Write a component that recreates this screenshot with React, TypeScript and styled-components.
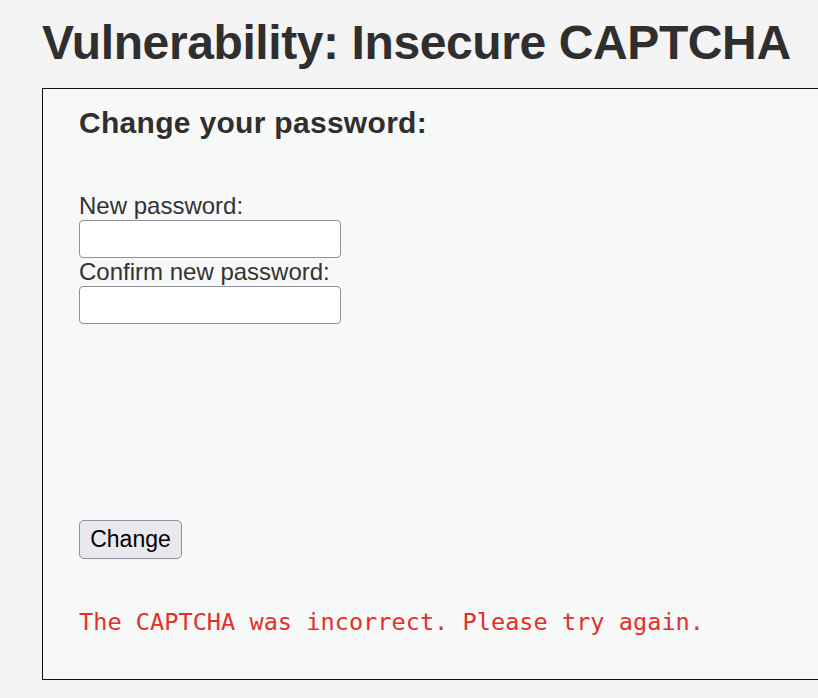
import styled, { createGlobalStyle } from "styled-components";

const GlobalStyle = createGlobalStyle`
  html, body {
    margin: 0;
    padding: 0;
    background: #f4f4f4;
    overflow: hidden;
  }
  body {
    font-family: "Liberation Sans", Arial, sans-serif;
    color: #333333;
  }
`;

const Page = styled.div`
  padding: 0 0 0 42px;
  width: 860px;
`;

const Title = styled.h1`
  margin: 0;
  padding: 15px 0 0 0;
  height: 73px;
  font-size: 48px;
  line-height: 56px;
  font-weight: 700;
  letter-spacing: -0.4px;
  color: #2f2f2f;
  white-space: nowrap;
`;

const Box = styled.div`
  border: 1px solid #111;
  background: #f7f8f8;
  height: 590px;
  padding: 0 0 0 36px;
  display: flex;
  flex-direction: column;
`;

const Heading = styled.h3`
  margin: 16px 0 0 0;
  font-size: 30px;
  line-height: 36px;
  font-weight: 700;
  letter-spacing: 0.3px;
  color: #2f2f2f;
`;

const Form = styled.form`
  display: flex;
  flex-direction: column;
  align-items: flex-start;
  margin-top: 51px;
`;

const Label = styled.label`
  font-size: 24px;
  line-height: 28px;
  color: #333;
`;

const Input = styled.input`
  box-sizing: border-box;
  width: 262px;
  height: 38px;
  margin: 0;
  border: 1px solid #8f8f9d;
  border-radius: 4px;
  background: #fff;
`;

const Button = styled.button`
  box-sizing: border-box;
  margin-top: 196px;
  width: 103px;
  height: 39px;
  padding: 0;
  border: 1px solid #8f8f9d;
  border-radius: 5px;
  background: #e9e9ed;
  font-family: "Liberation Sans", Arial, sans-serif;
  font-size: 23px;
  color: #000;
`;

const Error = styled.pre`
  margin: 48px 0 0 0;
  font-family: "DejaVu Sans Mono", monospace;
  font-size: 23.6px;
  line-height: 30px;
  color: #e3302a;
`;

export default function App() {
  return (
    <>
      <GlobalStyle />
      <Page>
        <Title>Vulnerability: Insecure CAPTCHA</Title>
        <Box>
          <Heading>Change your password:</Heading>
          <Form>
            <Label>New password:</Label>
            <Input type="password" />
            <Label>Confirm new password:</Label>
            <Input type="password" />
            <Button type="button">Change</Button>
          </Form>
          <Error>The CAPTCHA was incorrect. Please try again.</Error>
        </Box>
      </Page>
    </>
  );
}
